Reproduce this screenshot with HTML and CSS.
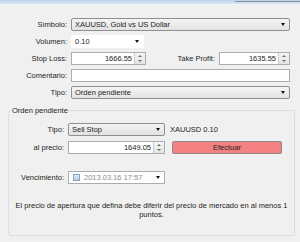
FILE: index.html
```html
<!DOCTYPE html>
<html lang="es">
<head>
    <meta charset="UTF-8">
    <title>Orden</title>
    <link rel="stylesheet" href="styles.css">
</head>
<body>
    <div class="titlebar"><span class="title-edge"></span></div>

    <div class="form">
        <div class="row">
            <span class="lbl">Símbolo:</span>
            <div class="combo gray full">XAUUSD, Gold vs US Dollar<span class="arrow"></span></div>
        </div>
        <div class="row">
            <span class="lbl">Volumen:</span>
            <div class="combo vol">0.10<span class="arrow"></span></div>
        </div>
        <div class="row">
            <span class="lbl">Stop Loss:</span>
            <div class="spin sl"><span class="val">1666.55</span><span class="spinbtn"><i class="up"></i><i class="down"></i></span></div>
            <span class="lbl tp-lbl">Take Profit:</span>
            <div class="spin tp"><span class="val">1635.55</span><span class="spinbtn"><i class="up"></i><i class="down"></i></span></div>
        </div>
        <div class="row">
            <span class="lbl">Comentario:</span>
            <div class="text full"></div>
        </div>
        <div class="row">
            <span class="lbl">Tipo:</span>
            <div class="combo gray full">Orden pendiente<span class="arrow"></span></div>
        </div>

        <fieldset class="group">
            <legend>Orden pendiente</legend>
            <div class="row">
                <span class="lbl">Tipo:</span>
                <div class="combo gray small">Sell Stop<span class="arrow"></span></div>
                <span class="info">XAUUSD 0.10</span>
            </div>
            <div class="row">
                <span class="lbl">al precio:</span>
                <div class="spin small"><span class="val">1649.05</span><span class="spinbtn"><i class="up"></i><i class="down"></i></span></div>
                <button class="btn">Efectuar</button>
            </div>
            <div class="row expiry">
                <span class="lbl">Vencimiento:</span>
                <div class="date small">
                    <span class="check"></span>
                    <span class="date-val">2013.03.16 17:57</span>
                    <span class="arrow"></span>
                </div>
            </div>
            <p class="note">El precio de apertura que defina debe diferir del precio de mercado en al menos 1 puntos.</p>
        </fieldset>
    </div>
</body>
</html>
```

FILE: styles.css
```css
body {
    margin: 0;
    background: #f0f0f0;
    font-family: 'Liberation Sans', Arial, sans-serif;
    font-size: 7.5px;
    color: #1e1e1e;
    width: 300px;
    height: 242px;
    overflow: hidden;
}
.titlebar {
    height: 4px;
    background: linear-gradient(#bcd3ee, #d8e6f5);
    position: relative;
}
.title-edge {
    position: absolute;
    left: 235px;
    right: 0;
    top: 1px;
    height: 1px;
    background: #8a8f96;
}
.form {
    padding: 14px 0 0 0;
}
.row {
    display: flex;
    align-items: center;
    height: 13px;
    margin-bottom: 4px;
}
.lbl {
    width: 67px;
    text-align: right;
    padding-right: 4px;
    flex: none;
}
.combo, .spin, .text, .date {
    height: 13px;
    box-sizing: border-box;
    border: 1px solid #abadb3;
    background: #fff;
    display: flex;
    align-items: center;
    padding-left: 3px;
    position: relative;
}
.combo.gray {
    background: linear-gradient(#f4f4f4, #e2e2e2);
    border-color: #8e8f8f;
    border-radius: 2px;
}
.full { width: 219px; }
.vol { width: 73px; border-color: #fff; }
.arrow {
    margin-left: auto;
    margin-right: 4px;
    width: 0;
    height: 0;
    border-left: 2.5px solid transparent;
    border-right: 2.5px solid transparent;
    border-top: 3px solid #111;
}
.spin {
    justify-content: flex-end;
    padding-left: 0;
}
.spin .val { padding-right: 2px; }
.spinbtn {
    width: 10px;
    height: 11px;
    border-left: 1px solid #c9c9c9;
    background: linear-gradient(#f5f5f5, #e4e4e4);
    display: flex;
    flex-direction: column;
    align-items: center;
    justify-content: space-around;
}
.spinbtn i {
    width: 0;
    height: 0;
    border-left: 2px solid transparent;
    border-right: 2px solid transparent;
}
.spinbtn .up { border-bottom: 2px solid #6a6a6a; }
.spinbtn .down { border-top: 2px solid #6a6a6a; }
.sl { width: 75px; }
.tp-lbl { width: 69px; }
.tp { width: 71px; }
.text { width: 219px; }

.group {
    margin: 7px 5px 0 8px;
    padding: 8px 0 0 0;
    border: 1px solid #d5dfe5;
    border-radius: 3px;
    height: 130px;
    box-sizing: border-box;
}
.group legend {
    padding: 0 1px;
    margin-left: 2px;
}
.group .lbl { width: 55px; }
.group .row { margin-bottom: 5px; }
.small { width: 97px; }
.info { margin-left: 5px; }
.btn {
    margin-left: 7px;
    width: 110px;
    height: 13px;
    border: 1px solid #8a8a8a;
    border-radius: 2px;
    background: #f38181;
    font: inherit;
    color: #1e1e1e;
    padding: 0;
}
.expiry { margin-top: 17px; }
.date { padding-left: 4px; }
.check {
    width: 7px;
    height: 7px;
    border: 1px solid #8aa2c0;
    background: linear-gradient(#dfeaf6, #b9cfe8);
    box-sizing: border-box;
    margin-right: 4px;
}
.date-val { color: #8d8d8d; }
.note {
    margin: 17px 6px 0 6px;
    text-align: center;
    line-height: 9px;
}
```
